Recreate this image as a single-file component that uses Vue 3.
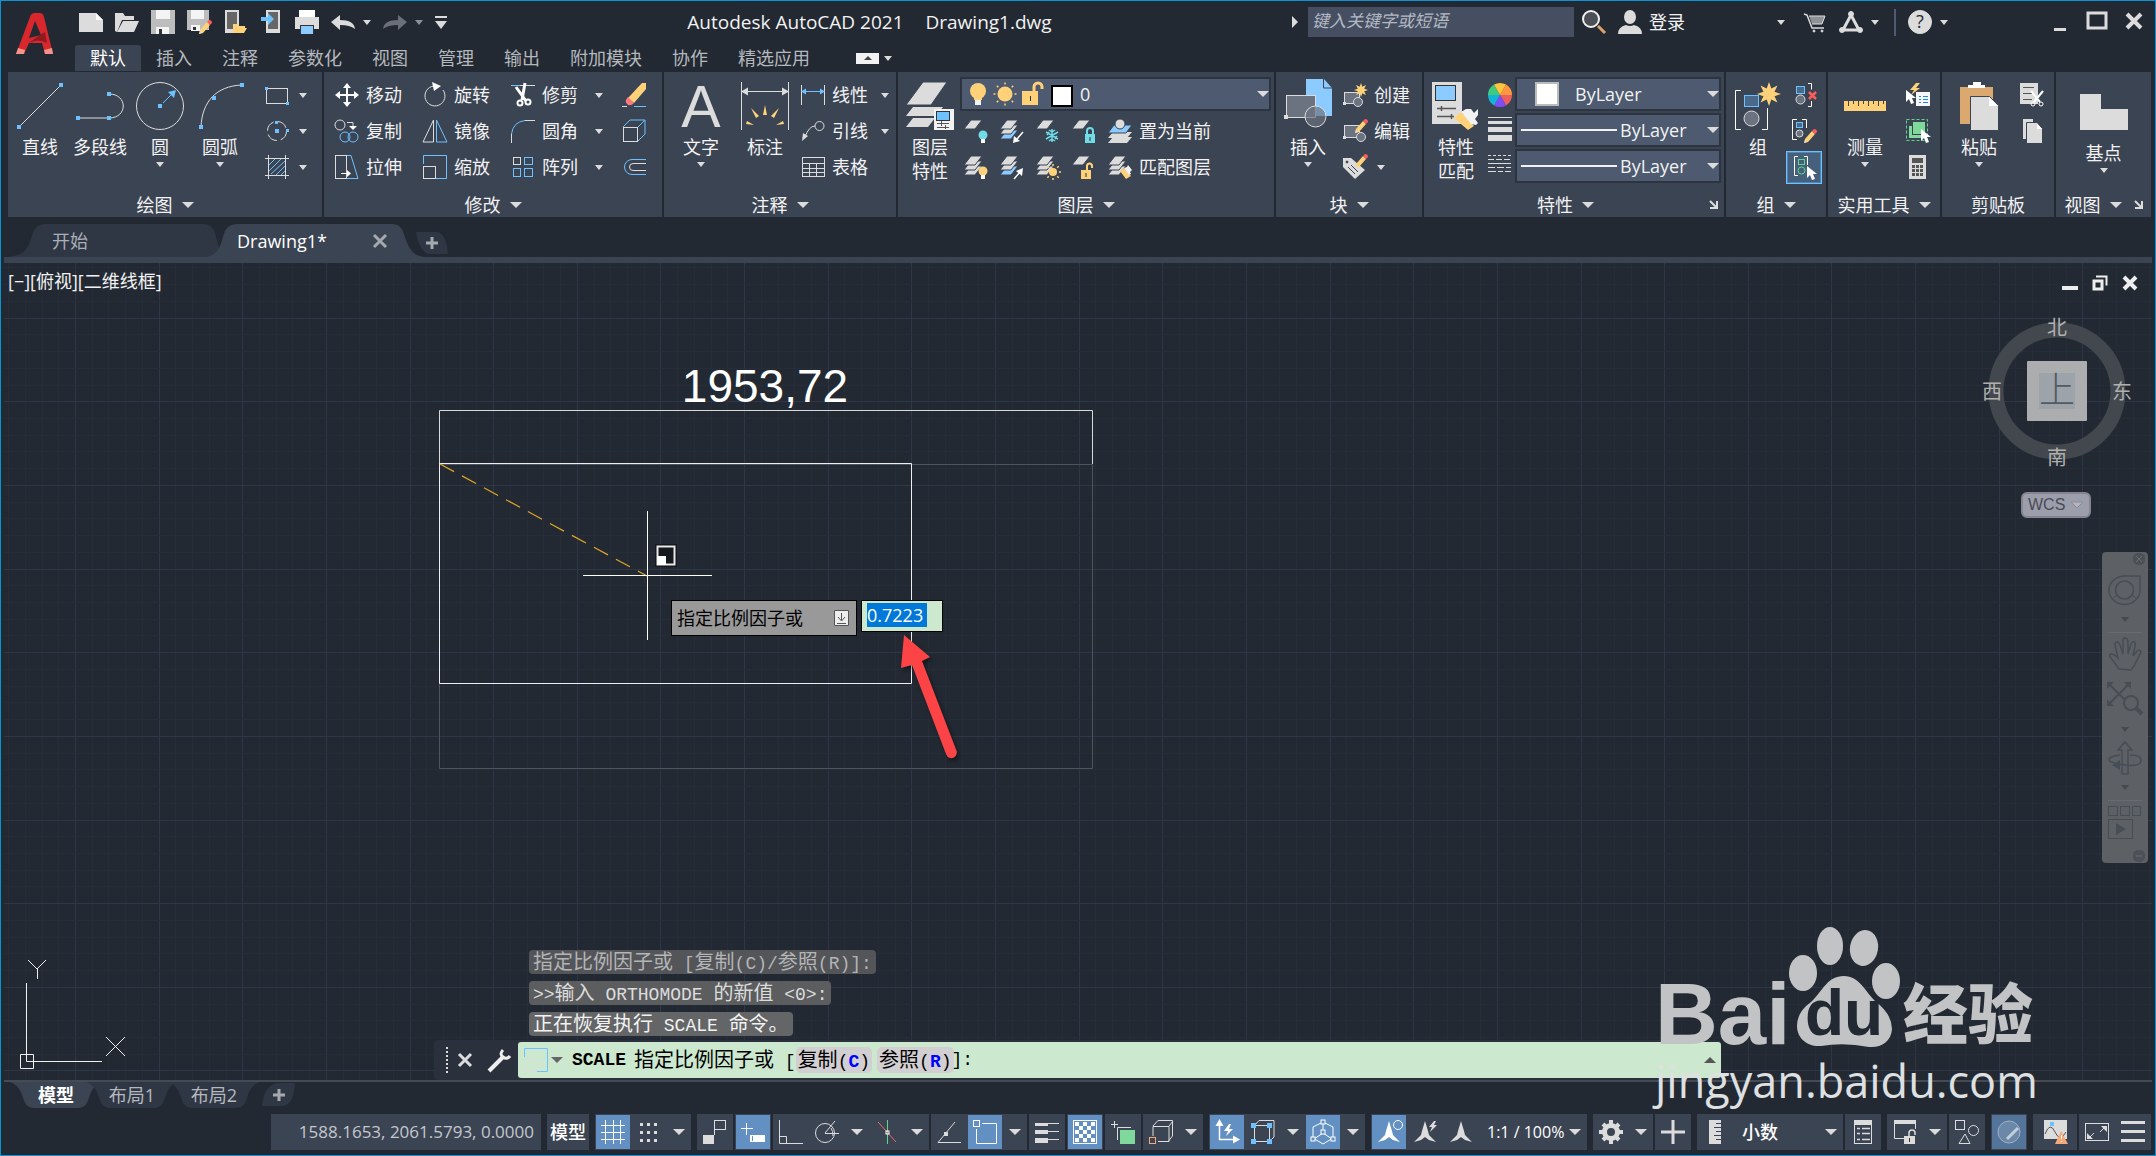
<script setup>
import { h, ref } from 'vue';

const L = '#dcdcdc';
const B = '#6ec1ff';
const Y = '#ffd27a';
const P = '#3b4453';

const line = (d, c = L, w = 1) => `<path d="${d}" fill="none" stroke="${c}" stroke-width="${w}"/>`;
const fill = (d, c = L) => `<path d="${d}" fill="${c}"/>`;
const box = (x, y, w, hh, c = L) => `<rect x="${x}" y="${y}" width="${w}" height="${hh}" fill="${c}"/>`;
const frame = (x, y, w, hh, c = L) => `<rect x="${x}" y="${y}" width="${w}" height="${hh}" fill="none" stroke="${c}"/>`;
const ring = (x, y, r, c = L, f = 'none', w = 1) => `<circle cx="${x}" cy="${y}" r="${r}" fill="${f}" stroke="${c}" stroke-width="${w}"/>`;
const dot = (x, y, c = B) => box(x - 2, y - 2, 4, 4, c);
const dashed = (d, dash) => `<path d="${d}" stroke="${L}" stroke-dasharray="${dash}"/>`;
const cursor = (x, y) => `<path d="M${x} ${y}v12l3 -3 2 5 3 -1 -2 -5h4z" fill="#fff"/>`;
const pencil = (x, y) => `<g transform="translate(${x} ${y})">${fill('M0 12l1 -4 7 -8 3 3 -7 8z', Y)}${fill('M8 0l2 -2q3 0 3 3l-2 2z', '#ff5c5c')}${fill('M0 12l1 -3 2 2z')}</g>`;
const sheets = (n, low = L) => {
  let s = '';
  for (let i = n - 1; i >= 0; i--) s += `<path d="M0 ${10 + i * 5}l7 -9h11l-7 9z" fill="${i === n - 1 && n > 1 ? low : L}" stroke="${P}"/>`;
  return s;
};
const bulb = (x, y, c) => `<circle cx="${x}" cy="${y}" r="4.5" fill="${c}"/>${box(x - 2, y + 4, 4, 4, '#fff')}`;
const lock = (x, y, c, open) => line(open ? `M${x + 6} ${y}v-4a2.5 2.5 0 0 1 5 0v2` : `M${x + 2} ${y}v-3a3 3 0 0 1 6 0v3`, c, 2) + box(x, y, 10, 9, c) + line(`M${x + 5} ${y + 3}v4`, '#333');
const star = (x, y, r) => {
  const pts = [];
  for (let i = 0; i < 16; i++) {
    const q = i % 2 ? r * 0.5 : r;
    pts.push(`${x + q * Math.sin((i * Math.PI) / 8)},${y - q * Math.cos((i * Math.PI) / 8)}`);
  }
  return `<polygon points="${pts.join(' ')}" fill="${Y}"/>`;
};
const sun = (x, y, r) => {
  let s = `<circle cx="${x}" cy="${y}" r="${r}" fill="${Y}"/>`;
  for (let i = 0; i < 8; i++) {
    const a = (i * Math.PI) / 4;
    s += line(`M${x + (r + 2) * Math.cos(a)} ${y + (r + 2) * Math.sin(a)}L${x + (r + 4) * Math.cos(a)} ${y + (r + 4) * Math.sin(a)}`, Y, 1.5);
  }
  return s;
};
const plane = (c) => fill('M12 1l3 10 1 4 7 7 -7 -2 -4 -3 -4 3 -7 2 7 -7 1 -4z', c);

const icons = {
  // quick access
  new: fill('M0 3h17l7 7v12H0z') + fill('M17 3v7h7z', '#fff'),
  open: fill('M0 21V3h8l2 3h9v4H7L2 22z') + fill('M8 11h16l-5 11H2z'),
  save: fill('M0 0h24v24H0z', '#bdbdbd') + box(5, 0, 14, 9, '#f4f4f4') + box(5, 17, 13, 7, '#f4f4f4') + box(8, 19, 3, 5, '#333'),
  saveas: fill('M0 0h22v20H0z', '#bdbdbd') + box(4, 0, 13, 9, '#f4f4f4') + box(4, 15, 9, 6, '#f4f4f4') + box(6, 17, 3, 3, '#333') + pencil(12, 12),
  webopen: box(2, 0, 14, 23) + box(4, 2, 10, 17, '#666') + fill('M10 23v-9h5l1 2h6v2h2l-3 5z', Y),
  websave: box(7, 0, 14, 23) + box(9, 2, 10, 17, '#666') + fill('M2 7h7V3l6 6 -6 6v-4H2z', B),
  print: box(4, 0, 16, 7, '#fff') + box(0, 7, 24, 12) + fill('M5 15h14v9H5z', '#333') + box(6, 16, 12, 8, '#8bcbff'),
  undo: fill('M0 12l9 -7v5q14 0 15 9 -5 -4 -15 -4v5z'),
  redo: fill('M24 12l-9 -7v5q-14 0 -15 9 5 -4 15 -4v5z', '#6b7078'),
  logo: fill('M1 41L15 4q1 -4 5 -4h5q3 0 4 4l9 37h-8l-3 -11H14l-5 11z', '#d9272e') + fill('M20 8l-6 17 12 -3z', '#232932') + fill('M14 30q10 -8 16 -11l2 11q-9 -5 -18 0z', '#8f1a1f') + fill('M1 41l2 -6 7 2 -1 4zM30 41l-1 -4 8 -2 1 6z', '#f3948c'),
  search: ring(9, 9, 8, '#f0f0f0', '#4a5056', 2) + line('M16 16l7 7', '#dba36b', 3),
  user: `<ellipse cx="12" cy="7" rx="6" ry="7" fill="${L}"/>` + fill('M0 24q0 -7 8 -9 4 2 8 0 8 2 8 9z'),
  cart: line('M0 4l3 1 5 13h12', L, 1.5) + fill('M5 6h16l-3 8H8z', '#8e9296') + line('M5 6h16l-3 8H8', L) + ring(10, 21, 1, L, L) + ring(18, 21, 1, L, L),
  share: line('M12 5L4 20H20z', L, 3) + ring(12, 4, 2.5, L, L) + ring(3, 20, 2.5, L, L) + ring(21, 20, 2.5, L, L),
  help: ring(12, 12, 11.5, L, L) + '<text x="12" y="18" text-anchor="middle" font-size="18" font-family="Open Sans" fill="#232932">?</text>',
  // draw
  line: line('M3 45L45 3') + dot(3, 45) + dot(45, 3),
  polyline: line('M2 36H33C52 36 52 12 33 12') + dot(2, 36) + dot(33, 36) + dot(33, 12),
  circle: ring(24, 24, 23.5) + line('M27 21l9 -9', B) + fill('M40 8l-2 8 -6 -6z', B) + dot(24, 24),
  arc: line('M5 45C6 20 20 4 46 3') + dot(5, 45) + dot(18, 16) + dot(46, 3),
  rect: frame(1.5, 5.5, 21, 15) + box(0, 4, 3, 3, B) + box(21, 19, 3, 3, B),
  ellipse: ring(12, 12, 9.5).replace('/>', ' stroke-dasharray="11 4"/>') + box(10, 10, 4, 4, B) + box(10, 2, 3, 3, B) + box(21, 10, 3, 3, B),
  hatch: line('M3.5 0v24M20.5 0v24M0 3.5h24M0 20.5h24') + line('M4 10l6 -6M4 16L16 4M6 19L20 6M11 20l9 -9M16 20l4 -4', B),
  // modify
  move: line('M12 3v18M3 12h18', '#fff', 2) + fill('M12 0l4 5H8zM12 24l-4 -5h8zM0 12l5 -4v8zM24 12l-5 4V8z', '#fff'),
  rotate: line('M20 7a10 10 0 1 1 -7 -4') + fill('M9 -1l9 4 -7 5z', '#fff'),
  trim: line('M0 2.5h9', B) + line('M9 2.5h15') + line('M5 4l10 14M14 0L11 17', '#fff', 3) + ring(9, 20, 2.5, '#fff', 'none', 2) + ring(17, 19, 2.5, '#fff', 'none', 2),
  erase: fill('M24 0v6L12 20 6 15 20 0z', Y) + fill('M6 14l6 6q-4 4 -7 1t1 -7z', '#ff7a80') + line('M0 23.5h5') + line('M12 23.5h12', B),
  copy: ring(5, 6, 5) + line('M12 3.5h6v4') + fill('M14 7h8l-4 4z', '#fff') + ring(10, 18, 5, B) + ring(18, 18, 5, B),
  mirror: line('M10.5 1v22H0z') + line('M13.5 1v22H24z', B),
  fillet: line('M0.5 24v-9') + line('M0.5 15Q2 3 14 1.5', B) + line('M14 1.5h10'),
  explode: frame(1.5, 8.5, 14, 14) + line('M1 8l7 -7h15M16 8l7 -7v14l-7 7', B),
  stretch: frame(0.5, 0.5, 11, 23) + line('M12 0.5h4l7 23H12', B) + line('M6 18.5h6', '#fff') + fill('M12 15v7l4 -3.5z', '#fff'),
  scale: line('M0.5 9V0.5h23v23H13', B) + frame(0.5, 11.5, 12, 12),
  array: frame(2.5, 2.5, 7, 7) + frame(13.5, 2.5, 8, 7, B) + frame(2.5, 13.5, 7, 8, B) + frame(13.5, 13.5, 8, 8, B),
  offset: line('M24 4.5H10a7.5 7.5 0 0 0 0 15h14', B) + line('M24 8.5H11a3.5 3.5 0 0 0 0 7h13'),
  // annotation
  text: `<text x="24" y="45" text-anchor="middle" font-size="59" font-family="Liberation Sans" fill="${L}">A</text>`,
  dim: line('M0.5 0v48M47.5 0v48M2 9.5h44') + fill('M0 9.5l7 -4v8zM48 9.5l-7 -4v8z') + fill('M22 33l2 -10 2 10zM15 36l-5 -10 8 8zM33 36l5 -10 -8 8zM13 43l-8 -1 1 -3zM35 43l8 -1 -1 -3z', Y),
  linear: line('M0.5 2v20M23.5 2v20') + line('M2 8.5h20', B) + fill('M0 8.5l5 -3v6zM24 8.5l-5 3v-6z', B),
  leader: ring(18.5, 7, 4.5) + line('M14 7q-6 0 -10 11') + fill('M1 22l1 -8 5 3z'),
  table: frame(1.5, 2.5, 22, 19) + line('M2 8.5h21M2 13.5h21M2 17.5h21M8.5 9v12M15.5 9v12'),
  // layers
  layers: fill('M0 45l7 -9h22l-7 9z') + fill('M0 34l7 -9h30l-7 9z') + `<path d="M0 23L17 0h24L25 23z" fill="${L}" stroke="${P}"/>` + box(28, 27, 20, 33, '#f2f2f2').replace('height="33"', 'height="21"') + `<rect x="30.5" y="29.500" width="13" height="9" fill="${B}" stroke="#333"/>` + line('M31 41.5h12M31 45.5h12M35.5 39v5M39.5 43v4', '#555'),
  bulb: `<circle cx="12" cy="9" r="8" fill="${Y}"/>` + box(8, 14, 8, 4, Y) + box(9, 18, 6, 5, '#f2f2f2'),
  sun: sun(12, 12, 7.5),
  unlock: line('M14 12V5a4 4 0 0 1 8 0v2', Y, 3) + box(2, 9, 16, 14, Y) + line('M10.5 14v5', '#333'),
  loff: sheets(1) + bulb(19, 16, '#6fdce8'),
  liso: sheets(3, '#8bcbff') + line('M23 13l-6 7', '#fff', 1.5) + fill('M13 24l1 -7 6 5z', '#fff'),
  lfreeze: sheets(1) + line('M16 10v13M10 13l12 7M22 13l-12 7M13 11l3 2 3 -2M13 22l3 -2 3 2M11 16l2 -3M21 17l-2 3', '#6fdce8', 1.5),
  llock: sheets(1) + lock(13, 15, '#6fdce8', false),
  lcur: fill('M0 24l5 -6h19l-5 6z') + fill('M0 19l5 -6h19l-5 6z') + `<path d="M0 14l6 -8h18l-6 8z" fill="#8bcbff" stroke="${P}"/>` + ring(12, 5, 5, P, L),
  lon: sheets(3) + bulb(19, 16, Y),
  luniso: sheets(3, '#8bcbff') + line('M14 24l6 -7', '#fff', 1.5) + fill('M23 13l-1 8 -6 -5z', '#fff'),
  lthaw: sheets(3) + sun(17, 17, 4),
  lunlock: sheets(1) + lock(9, 15, Y, true),
  lmatch: sheets(3) + fill('M12 16l4 -3 7 8 -5 3z', Y) + fill('M16 13l3 -1 1 -2 4 5 -2 2 1 2 -2 1z', '#f2f2f2'),
  // block
  insert: fill('M22 -3h18l8 9v28H22z', '#8bcbff') + line('M39.5 -3v9h9', P) + `<rect x="2.500" y="13.500" width="29" height="22" fill="#6b7280" stroke="${L}"/>` + ring(31.5, 34.5, 10.5, L, '#6b7280b0') + box(0, 33, 4, 4),
  create: `<rect x="1.500" y="9.500" width="15" height="11" fill="#6b7280" stroke="${L}"/>` + box(0, 19, 3, 3) + ring(15, 19, 4.5, L, '#6b7280') + star(18, 7, 7),
  edit: `<rect x="1.500" y="6.500" width="15" height="12" fill="#6b7280" stroke="${L}"/>` + box(0, 17, 3, 3) + ring(18, 18, 4.5, L, '#6b7280') + pencil(12, 2),
  tag: fill('M0 3h8l14 12 -10 9L0 12z') + ring(4, 7, 1, P, P) + line('M5 12l7 7M8 10l7 7', P) + pencil(12, 1),
  // properties
  match: box(0, 0, 30, 42) + `<rect x="3.500" y="3.500" width="20" height="15" fill="#8bcbff" stroke="#333"/>` + line('M5 26.5h19M5 34.5h17M9.5 24v5M19.5 32v5', '#555', 1.5) + fill('M22 36l7 -6 13 14 -6 4z', Y) + fill('M29 30l5 -3h5l3 4 4 -4v6l-3 4 3 4 -2 2 -5 -1z', '#f2f2f2'),
  wheel: ['#ff9640', '#ec5f5f', '#7f4bf5', '#12b5d8', '#3fca7d', '#ffc53d'].map((c, i) => {
    const a = ((i * 60 - 60) * Math.PI) / 180;
    const b = ((i * 60) * Math.PI) / 180;
    return fill(`M12 12L${12 + 12 * Math.cos(a)} ${12 + 12 * Math.sin(a)}A12 12 0 0 1 ${12 + 12 * Math.cos(b)} ${12 + 12 * Math.sin(b)}z`, c);
  }).join(''),
  weights: box(0, -2, 24, 1) + box(0, 2, 24, 3) + box(0, 8, 24, 5) + box(0, 16, 24, 6),
  types: dashed('M0 0.5h23', '3 2') + dashed('M0 4.5h23', '6 2') + line('M0 8.5h23') + dashed('M0 12.5h23', '7 2') + line('M0 16.5h8M10 16.5h5M17 16.5h6'),
  // group
  group: line('M7 8.5H1.5v39H7M28 47.5h5.5V26', '#fff') + `<rect x="10.500" y="13.500" width="14" height="11" fill="#4a6a8c" stroke="${B}"/>` + ring(17.5, 36.5, 7.5, L, '#6b7280') + star(35, 12, 12),
  ungroup: `<rect x="4.500" y="3.500" width="8" height="7" fill="#4a6a8c" stroke="${B}"/>` + ring(8.5, 16.5, 4.5, L, '#6b7280') + line('M16 0.5h3.5v6M16 23.5h3.5V18', '#fff') + line('M17 9l7 7M24 9l-7 7', '#ff5c5c', 2.5),
  groupedit: line('M5 0.5H0.5v20H5M10 0.5h4.5V9', '#fff') + `<rect x="4.500" y="3.500" width="6" height="5" fill="#4a6a8c" stroke="${B}"/>` + ring(7.5, 14.5, 3.5, L, '#6b7280') + pencil(12, 12),
  groupsel: line('M6 1.5H2.5v19H6M12 1.5h3.5V10', '#fff') + frame(6.5, 4.5, 6, 5, '#5fd68a') + ring(9.5, 15.5, 3.5, '#5fd68a') + cursor(15, 11),
  // utilities
  measure: box(3, 19, 42, 10, Y) + line('M7.5 19v5M12.5 19v3M17.5 19v5M22.5 19v3M27.5 19v5M32.5 19v3M37.5 19v5M42.5 19v3', '#444'),
  quick: fill('M10 0L4 7h4l-3 5 9 -7h-4l4 -5z', Y) + cursor(0, 7) + box(10, 9, 14, 14, '#f7f7f7') + line('M13 13.5h2M17 13.5h5M13 16.5h2M17 16.5h5M13 19.5h2M17 19.5h5', '#1e88e5'),
  selall: frame(0.5, 0.5, 21, 21, '#5fd68a').replace('/>', ' stroke-dasharray="3 2"/>') + box(3, 7, 12, 12, '#7ed99b') + `<rect x="6.500" y="2.500" width="13" height="13" fill="#7ed99b" stroke="${P}"/>` + cursor(15, 10),
  calc: box(3, 0, 17, 24) + box(6, 3, 11, 5, '#555') + line('M6 11.5h3M10 11.5h3M14 11.5h3M6 15.5h3M10 15.5h3M14 15.5h3M6 19.5h3M10 19.5h3M14 19.5h3', '#555', 3),
  // clipboard, view
  paste: box(5, 5, 33, 37, '#dba96f') + fill('M13 6V3h5V0h8v3h4v3z', '#fff') + `<path d="M15.5 14.5h19l9 9v25h-28z" fill="${L}" stroke="${P}"/>` + fill('M34 15v9h9z', '#fff'),
  cut: box(0, 0, 18, 21) + line('M3 4.5h11M3 10.5h9M3 16.5h9', '#555', 1) + line('M11 8l9 11M23 8l-9 11', '#fff', 2) + ring(13, 21, 2, '#fff') + ring(21, 21, 2, '#fff'),
  copyclip: box(3, 0, 10, 20) + `<path d="M6.5 3.5h10l6 6v15h-16z" fill="${L}" stroke="${P}"/>` + fill('M17 4v6h5z', '#fff'),
  base: fill('M0 6h21v15h27v21H0z'),
  // canvas
  wrench: line('M2 23L16 9', '#eee', 4) + line('M16 2q-4 4 0 7t7 -1', '#eee', 3),
  wheelnav: line('M1 15A16 14 0 0 1 17 1h15v14A15 14 0 0 1 1 15z', '#474d55', 1.5) + ring(16.5, 15, 9, '#474d55', 'none', 1.5) + line('M4 24l5 -4M29 24l-5 -4', '#474d55'),
  pan: line('M11 31L3 20q-3 -3 0 -4 3 0 7 4L7 7q0 -3 2 -3t3 3l3 9V3q0 -3 2 -3t3 3v13l3 -10q1 -3 3 -2t1 4l-2 10 4 -5q3 -2 4 1l-7 14 -3 4z', '#474d55', 1.5),
  zoomext: line('M2 2l20 20M22 2L2 22', '#474d55', 2) + fill('M0 0h7L0 7zM24 0v7l-7 -7zM0 24v-7l7 7z', '#474d55') + ring(24, 21, 7, '#474d55', '#5d6165', 2) + line('M29 26l6 6', '#474d55', 4),
  orbit: line('M14 32V8h-4l7 -8 7 8h-4v24zM12 13q-12 2 -11 5t16 5 16 -4 -11 -6', '#474d55', 1.5) + fill('M4 23l8 -5v10z', '#474d55'),
  motion: frame(0.5, 0.5, 9, 9, '#474d55') + frame(12.5, 0.5, 9, 9, '#474d55') + frame(24.5, 0.5, 8, 9, '#474d55') + frame(0.5, 13.5, 24, 19, '#474d55') + fill('M8 17l10 6 -10 6z', '#474d55'),
  // status bar
  grid: line('M4.5 0v24M12.5 0v24M19.5 0v24M0 5.5h24M0 12.5h24M0 19.5h24', '#fff', 1),
  snap: [3, 10, 17].map((x) => [3, 11, 19].map((y) => box(x, y, 3, 3)).join('')).join(''),
  infer: box(0, 15, 11, 9) + frame(11.5, 0.5, 11, 9) + line('M11.5 10v5'),
  dyn: line('M0 8.5h12M5.5 3v12', '#fff') + box(9, 15, 15, 7, '#fff') + line('M11.5 16v5', '#6290c2'),
  ortho: line('M0.5 0v23.5H24M0.5 16.5h7v7'),
  polar: ring(10, 13, 9.5) + line('M10 13.5h14M10 13L20 1M16 8q2 3 2 8'),
  iso: line('M12.5 0v24', '#5fd68a') + line('M3 2l9 10 9 10', '#ec6a6a') + frame(11, 11, 3, 3, '#fff'),
  otrack: line('M18 2L1 22.5h23') + box(7, 12, 4, 4),
  osnap: line('M9 3.5h14.5v20H3.5V9', '#fff') + frame(0.5, 0.5, 6, 6, '#fff'),
  lwt: box(0, 3, 13, 3) + line('M13 3.5h11M13 11.5h11M13 19.5h11') + box(0, 10, 13, 4) + box(0, 18, 13, 5),
  transp: frame(0.5, 0.5, 23, 23, '#fff') + [0, 1, 2, 3, 4].map((r) => [0, 1, 2, 3, 4].map((c) => ((r + c) % 2 ? '' : box(2 + c * 4, 2 + r * 4, 4, 4, '#fff'))).join('')).join(''),
  cycle: line('M0 4.5h7M3.5 1v7M6.5 20V7.5H20') + box(9, 10, 15, 14, '#7ed99b'),
  cube: line('M4 16V6.5h16v15H9M4 6l5 -5.5h14.5V16l-4 5M20 6l4 -5') + frame(0.5, 17.5, 6, 6, '#f5a878'),
  ucs: line('M4.5 4v15.5H20', '#fff', 1.5) + fill('M4.5 -1l4 7h-8zM25 19.5l-7 -4v8zM14 4l-5 7h4l-2 5 7 -7h-4l2 -5z', '#fff'),
  filter: frame(3.5, 5.5, 15, 16) + line('M4 5l4 -4.5h15V17l-4 4') + box(0, 3, 5, 5, B) + box(16, 3, 5, 5, B) + box(0, 19, 5, 5, B) + box(16, 19, 5, 5, B),
  gizmo: line('M12 2L2 7v11l10 6 10 -6V7zM12 3v10M12 13l-9 6M12 13l9 6', '#fff') + ['10 0', '10 10', '0 17', '20 17'].map((p) => `<rect x="${p.split(' ')[0]}" y="${p.split(' ')[1]}" width="4" height="4" fill="#6290c2" stroke="#fff"/>`).join(''),
  annovis: plane('#fff') + ring(21, 5, 4.5, '#fff'),
  annoauto: plane(L) + fill('M21 1l-5 6h3l-2 5 7 -7h-3l2 -4z'),
  anno: plane(L),
  gear: ring(12, 12, 6.5, L, 'none', 5) + line('M12 0v4M12 20v4M0 12h4M20 12h4M4 4l3 3M20 4l-3 3M4 20l3 -3M20 20l-3 -3', L, 4),
  plus: line('M12 0v24M0 12h24', L, 3),
  ruler: box(6, 0, 12, 24) + line('M13 3.5h5M11 7.5h7M13 11.5h5M11 15.5h7M13 19.5h5', '#3b4453'),
  props: frame(3.5, 0.5, 17, 23) + box(3, 0, 18, 5) + line('M6 8.5h3M11 8.5h8M6 13.5h3M11 13.5h8M6 19.5h3M11 19.5h8', L, 1.5),
  uilock: line('M11 18.5H1.5V3M22.5 3v6') + box(1, 0, 22, 4) + line('M16 16v-3a3 3 0 0 1 6 0v2', L, 1.5) + box(11, 16, 11, 8) + line('M16.5 18v4', '#333'),
  isolate: frame(0.5, 0.5, 9, 9) + ring(18.5, 10.5, 5) + line('M10 14l5 9.5H4z'),
  perf: ring(12, 12, 11, '#9db1c7', '#6c88a8') + line('M10 19L21 8', '#c3ced9', 3),
  trusted: box(1, 0, 23, 19) + line('M2 14Q7 1 12 12T23 12', '#555') + dot(9, 4) + fill('M18 11l7 13H12z', '#f5a878') + line('M18.5 15v4M18.5 21v1', '#fff'),
  clean: frame(0.5, 3.5, 23, 17) + fill('M16 6h6v6zM2 13v6h6z') + line('M15 12l4 -4M9 13l-4 4'),
  menu: line('M0 2.5h24M0 11.5h24M0 20.5h24', L, 3),
};

const Icon = (props) => {
  const w = props.w || 24;
  const hh = props.h || w;
  return h('svg', { width: w, height: hh, viewBox: `0 0 ${w} ${hh}`, innerHTML: icons[props.name], 'aria-hidden': 'true' });
};
Icon.props = ['name', 'w', 'h'];

const quickAccess = ['new', 'open', 'save', 'saveas', 'webopen', 'websave', 'print', 'undo'];
const menus = ['默认', '插入', '注释', '参数化', '视图', '管理', '输出', '附加模块', '协作', '精选应用'];
const activeMenu = ref('默认');

const drawTools = [
  { icon: 'line', label: '直线' },
  { icon: 'polyline', label: '多段线' },
  { icon: 'circle', label: '圆', more: true },
  { icon: 'arc', label: '圆弧', more: true },
];
const modifyRows = [
  { tools: [['move', '移动'], ['rotate', '旋转'], ['trim', '修剪']], last: 'erase' },
  { tools: [['copy', '复制'], ['mirror', '镜像'], ['fillet', '圆角']], last: 'explode' },
  { tools: [['stretch', '拉伸'], ['scale', '缩放'], ['array', '阵列']], last: 'offset' },
];
const annotate = [['linear', '线性', true], ['leader', '引线', true], ['table', '表格', false]];
const layerRows = [
  { tools: ['loff', 'liso', 'lfreeze', 'llock'], icon: 'lcur', label: '置为当前' },
  { tools: ['lon', 'luniso', 'lthaw', 'lunlock'], icon: 'lmatch', label: '匹配图层' },
];

const layouts = ref(['模型', '布局1', '布局2']);
const scaleFactor = ref('0.7223');

// each group is a run of cells; "v" is a drop-down arrow, "*" marks a cell that is on
const statusGroups = [
  { cells: ['*grid', 'snap', 'v'], gap: true },
  { cells: ['infer'], gap: true },
  { cells: ['*dyn'] },
  { cells: ['ortho', 'polar', 'v', 'iso', 'v'] },
  { cells: ['otrack', '*osnap', 'v'] },
  { cells: ['lwt'] },
  { cells: ['*transp'] },
  { cells: ['cycle'] },
  { cells: ['cube', 'v'] },
  { cells: ['*ucs', 'filter', 'v', '*gizmo', 'v'], gap: true },
  { cells: ['*annovis', 'annoauto', 'anno', 'scale'], gap: true },
  { cells: ['gear', 'v'], gap: true },
  { cells: ['plus'] },
  { cells: ['units'], gap: true },
  { cells: ['props'] },
  { cells: ['uilock', 'v'], gap: true },
  { cells: ['isolate'] },
  { cells: ['*perf'], gap: true },
  { cells: ['trusted'], gap: true },
  { cells: ['clean', 'menu'] },
];

// grid lines: a major one every 84 px or so, four minor ones between
const step = 83.64 / 5;
const columns = Array.from({ length: 160 }, (_, i) => ({ at: Math.round(75 + (i - 4) * step), major: (i - 4) % 5 === 0 }));
const rows = Array.from({ length: 90 }, (_, i) => ({ at: Math.round(401.3 + (i - 8) * step), major: (i - 10) % 5 === 3 || (i - 8) % 5 === 0 }));
</script>

<template>
  <div class="app">
    <header class="top">
      <button class="logo" aria-label="AutoCAD"><Icon name="logo" :w="39" :h="42" /></button>
      <div class="top-main">
        <div class="title-row">
          <div class="quick">
            <button v-for="q in quickAccess" :key="q" :aria-label="q"><Icon :name="q" /></button>
            <button class="more" aria-label="undo list"><i class="caret"></i></button>
            <button aria-label="redo"><Icon name="redo" /></button>
            <button class="more dim" aria-label="redo list"><i class="caret"></i></button>
            <button class="custom" aria-label="customize"><i class="caret wide"></i></button>
          </div>
          <h1><span>Autodesk AutoCAD 2021</span><span>Drawing1.dwg</span></h1>
          <div class="info">
            <i class="caret right"></i>
            <input type="text" class="search" placeholder="键入关键字或短语" aria-label="搜索">
            <button aria-label="search"><Icon name="search" /></button>
            <button class="login"><Icon name="user" />登录<i class="caret"></i></button>
            <button aria-label="store"><Icon name="cart" /></button>
            <button class="with-caret" aria-label="share"><Icon name="share" /><i class="caret"></i></button>
            <span class="bar"></span>
            <button class="with-caret" aria-label="help"><Icon name="help" /><i class="caret"></i></button>
          </div>
          <div class="window-buttons">
            <button aria-label="minimize"><svg width="20" height="20"><path d="M4 17h12v3H4z" fill="#dcdcdc" /></svg></button>
            <button aria-label="maximize"><svg width="20" height="20"><path d="M1 2h18v15H1z" fill="none" stroke="#dcdcdc" stroke-width="3" /></svg></button>
            <button aria-label="close"><svg width="20" height="20"><path d="M3 3l14 14M17 3L3 17" stroke="#dcdcdc" stroke-width="4" /></svg></button>
          </div>
        </div>
        <nav class="menus">
          <button v-for="m in menus" :key="m" :class="{ active: m === activeMenu }" @click="activeMenu = m">{{ m }}</button>
          <button class="collapse" aria-label="collapse"><i></i></button>
          <i class="caret"></i>
        </nav>
      </div>
    </header>

    <section class="ribbon">
      <div class="panel">
        <div class="body draw">
          <button v-for="t in drawTools" :key="t.icon" class="large"><Icon :name="t.icon" :w="48" />{{ t.label }}<i v-if="t.more" class="caret"></i></button>
          <div class="stack">
            <button v-for="i in ['rect', 'ellipse', 'hatch']" :key="i" class="pair" :aria-label="i"><Icon :name="i" /><i class="caret"></i></button>
          </div>
        </div>
        <button class="foot">绘图<i class="caret big"></i></button>
      </div>

      <div class="panel">
        <div class="body modify">
          <template v-for="r in modifyRows" :key="r.last">
            <button v-for="t in r.tools" :key="t[0]" class="small"><Icon :name="t[0]" />{{ t[1] }}</button>
            <button class="more" :aria-label="r.tools[2][1]"><i class="caret"></i></button>
            <button class="small end" :aria-label="r.last"><Icon :name="r.last" /></button>
          </template>
        </div>
        <button class="foot">修改<i class="caret big"></i></button>
      </div>

      <div class="panel">
        <div class="body note">
          <button class="large"><Icon name="text" :w="48" />文字<i class="caret"></i></button>
          <button class="large"><Icon name="dim" :w="48" />标注</button>
          <div class="stack">
            <button v-for="a in annotate" :key="a[0]" class="small spread"><Icon :name="a[0]" />{{ a[1] }}<i v-if="a[2]" class="caret"></i></button>
          </div>
        </div>
        <button class="foot">注释<i class="caret big"></i></button>
      </div>

      <div class="panel">
        <div class="body layer">
          <button class="large"><Icon name="layers" :w="48" /><span>图层<br>特性</span></button>
          <div class="stack grow">
            <label class="combo">
              <Icon name="bulb" /><Icon name="sun" /><Icon name="unlock" /><i class="swatch"></i>
              <select aria-label="图层"><option>0</option></select>
              <i class="caret big"></i>
            </label>
            <div v-for="r in layerRows" :key="r.icon" class="tools">
              <button v-for="t in r.tools" :key="t" :aria-label="t"><Icon :name="t" /></button>
              <button class="small"><Icon :name="r.icon" />{{ r.label }}</button>
            </div>
          </div>
        </div>
        <button class="foot">图层<i class="caret big"></i></button>
      </div>

      <div class="panel">
        <div class="body block">
          <button class="large"><Icon name="insert" :w="48" />插入<i class="caret"></i></button>
          <div class="stack">
            <button class="small"><Icon name="create" />创建</button>
            <button class="small"><Icon name="edit" />编辑</button>
            <button class="small" aria-label="属性"><Icon name="tag" /><i class="caret"></i></button>
          </div>
        </div>
        <button class="foot">块<i class="caret big"></i></button>
      </div>

      <div class="panel">
        <div class="body props">
          <button class="large"><Icon name="match" :w="48" /><span>特性<br>匹配</span></button>
          <div class="stack icons">
            <Icon name="wheel" /><Icon name="weights" /><Icon name="types" />
          </div>
          <div class="stack grow">
            <label class="combo color"><i class="swatch"></i><select aria-label="颜色"><option>ByLayer</option></select><i class="caret big"></i></label>
            <label class="combo"><i class="rule"></i><select aria-label="线宽"><option>ByLayer</option></select><i class="caret big"></i></label>
            <label class="combo"><i class="rule"></i><select aria-label="线型"><option>ByLayer</option></select><i class="caret big"></i></label>
          </div>
        </div>
        <button class="foot launch">特性<i class="caret big"></i><svg width="9" height="9"><path d="M1 1l6 6M8 1v7H1" fill="none" stroke="#dcdcdc" stroke-width="2" /></svg></button>
      </div>

      <div class="panel">
        <div class="body two">
          <button class="large"><Icon name="group" :w="48" />组</button>
          <div class="stack icons">
            <button aria-label="解除编组"><Icon name="ungroup" /></button>
            <button aria-label="组编辑"><Icon name="groupedit" /></button>
            <button class="on" aria-label="组选择"><Icon name="groupsel" /></button>
          </div>
        </div>
        <button class="foot">组<i class="caret big"></i></button>
      </div>

      <div class="panel">
        <div class="body two">
          <button class="large"><Icon name="measure" :w="48" />测量<i class="caret"></i></button>
          <div class="stack icons">
            <button v-for="i in ['quick', 'selall', 'calc']" :key="i" :aria-label="i"><Icon :name="i" /></button>
          </div>
        </div>
        <button class="foot">实用工具<i class="caret big"></i></button>
      </div>

      <div class="panel">
        <div class="body two">
          <button class="large"><Icon name="paste" :w="48" />粘贴<i class="caret"></i></button>
          <div class="stack icons">
            <button v-for="i in ['cut', 'copyclip']" :key="i" :aria-label="i"><Icon :name="i" /></button>
          </div>
        </div>
        <button class="foot">剪贴板</button>
      </div>

      <div class="panel">
        <div class="body one">
          <button class="large"><Icon name="base" :w="48" />基点<i class="caret"></i></button>
        </div>
        <button class="foot launch">视图<i class="caret big"></i><svg width="9" height="9"><path d="M1 1l6 6M8 1v7H1" fill="none" stroke="#dcdcdc" stroke-width="2" /></svg></button>
      </div>
    </section>

    <nav class="files">
      <button class="file">
        <svg class="shape" viewBox="0 0 220 33" preserveAspectRatio="none"><path d="M0 33C18 31 20 24 24 10Q27 0 37 0H192Q200 0 203 8C208 26 208 31 220 33z" /></svg>
        <span>开始</span>
      </button>
      <button class="file current">
        <svg class="shape" viewBox="0 0 220 33" preserveAspectRatio="none"><path d="M0 33C12 31 14 24 18 10Q21 0 31 0H188Q196 0 199 8C205 26 208 31 220 33z" /></svg>
        <span>Drawing1*</span>
        <svg width="14" height="14"><path d="M1 1l12 12M13 1L1 13" stroke="#a5a9af" stroke-width="3" /></svg>
      </button>
      <button class="add" aria-label="新图形"><svg width="32" height="22"><path d="M0 0H20Q30 0 32 22H14Q4 22 0 0z" fill="#303744" /><path d="M16 5v12M10 11h12" stroke="#a5a9af" stroke-width="3" /></svg></button>
    </nav>

    <main class="canvas">
      <svg class="drawing" width="100%" height="100%">
        <g transform="translate(-4 -263)" shape-rendering="crispEdges">
          <rect v-for="c in columns" :key="'c' + c.at" :x="c.at" y="0" width="1" height="2200" :class="c.major ? 'major' : 'minor'" />
          <rect v-for="r in rows" :key="'r' + r.at" x="0" :y="r.at" width="4000" height="1" :class="r.major ? 'major' : 'minor'" />
        </g>
        <g transform="translate(-4 -263)" fill="none">
          <path d="M439.500 464.500H1092.500V768.500H439.500z" stroke="#4e545b" />
          <path d="M439.500 464V410.500H1092.500V464" stroke="#d9dadc" />
          <path d="M439.500 463.500H911.500V683.500H439.500z" stroke="#eceef2" />
          <path d="M440 464L647 576" stroke="#e0a526" stroke-width="1.200" stroke-dasharray="16 9" />
          <path d="M647.500 511V640M583 575.500H712" stroke="#fff" />
          <rect x="655" y="544" width="22" height="23" fill="#15181c" />
          <path d="M657.500 546.500h17v18h-17z" stroke="#e8e8e8" stroke-width="2" />
          <rect x="657" y="556" width="9" height="9" fill="#fff" />
          <text x="765" y="402" class="dimension" text-anchor="middle">1953,72</text>
        </g>
      </svg>

      <p class="view-label">[−][俯视][二维线框]</p>

      <label class="prompt" for="factor">指定比例因子或
        <svg width="15" height="16"><path d="M0.500 0.500h14v15H0.500z" fill="#eee" stroke="#555" /><path d="M7.500 3v7M4 7l3.500 4L11 7M3 13.500h9" fill="none" stroke="#555" /></svg>
      </label>
      <div class="value"><input id="factor" v-model="scaleFactor" type="text"></div>
      <svg class="pointer" width="68" height="132"><path d="M9 5L35 27L27 31L62 122Q61 129 55 128Q52 127 51 124L17 35L6 38z" fill="#fc4446" /></svg>

      <div class="view-buttons">
        <button aria-label="最小化"><svg width="16" height="16"><path d="M0 11h16v4H0z" fill="#eee" /></svg></button>
        <button aria-label="还原"><svg width="16" height="16"><path d="M4 1.500h10.500v9" fill="none" stroke="#eee" stroke-width="2" /><path d="M2 6h8v8H2z" fill="none" stroke="#eee" stroke-width="3" /></svg></button>
        <button aria-label="关闭"><svg width="16" height="16"><path d="M2 2l12 12M14 2L2 14" stroke="#eee" stroke-width="4" /></svg></button>
      </div>

      <svg class="view-cube" width="152" height="160" viewBox="0 0 152 160">
        <circle cx="76" cy="80" r="61" fill="none" stroke="#43484f" stroke-width="15" />
        <rect x="46" y="50" width="60" height="60" rx="1" fill="#acadae" />
        <rect x="58" y="62" width="36" height="36" fill="#9ca4a9" />
        <g text-anchor="middle" fill="#b0b0ae" font-size="20">
          <text x="76" y="24">北</text><text x="76" y="154">南</text>
          <text x="11" y="88">西</text><text x="141" y="88">东</text>
          <text x="76" y="92" font-size="36" font-weight="300" fill="#535a64">上</text>
        </g>
      </svg>
      <button class="wcs">WCS<svg width="14" height="8"><path d="M1 1h12L7 7z" fill="#b2b3be" stroke="#8a8b98" /></svg></button>

      <aside class="nav-bar">
        <svg class="nav-close" width="12" height="12"><rect width="12" height="12" rx="5" fill="#4c5157" /><path d="M3 3l6 6M9 3L3 9" stroke="#686d72" /></svg>
        <button aria-label="导航控制盘"><Icon name="wheelnav" :w="34" :h="32" /></button>
        <i class="caret"></i>
        <button class="ruled" aria-label="平移"><Icon name="pan" :w="34" :h="34" /></button>
        <button aria-label="缩放"><Icon name="zoomext" :w="36" :h="34" /></button>
        <i class="caret"></i>
        <button aria-label="动态观察"><Icon name="orbit" :w="34" :h="33" /></button>
        <i class="caret"></i>
        <button class="ruled" aria-label="ShowMotion"><Icon name="motion" :w="34" :h="34" /></button>
        <svg class="nav-close" width="12" height="12"><rect width="12" height="12" rx="5" fill="#4c5157" /><path d="M3 6h6" stroke="#686d72" /></svg>
      </aside>

      <svg class="ucs" width="116" height="116" fill="none" stroke="#f0f0f0">
        <path d="M12.500 24V102.500H88M6.500 95.500h13v14h-13zM14 1l9 9 9 -9M23.500 10v10M92 78l19 19M111 78L92 97" />
      </svg>

      <div class="command">
        <p class="old">指定比例因子或<b> [</b>复制<b>(C)/</b>参照<b>(R)]:</b></p>
        <p class="mid-line"><b>&gt;&gt;</b>输入<b> ORTHOMODE </b>的新值<b> &lt;0&gt;:</b></p>
        <p>正在恢复执行<b> SCALE </b>命令。</p>
        <div class="command-bar">
          <span class="grip"></span>
          <button aria-label="关闭"><svg width="14" height="14"><path d="M1 1l12 12M13 1L1 13" stroke="#dcdcdc" stroke-width="3" /></svg></button>
          <button class="wrench" aria-label="自定义"><Icon name="wrench" /></button>
          <div class="entry">
            <Icon name="scale" />
            <i class="caret big"></i>
            <strong>SCALE</strong>
            <span>指定比例因子或<b> [</b></span>
            <button class="chip">复制<b>(<em>C</em>)</b></button>
            <button class="chip">参照<b>(<em>R</em>)</b></button>
            <b>]:</b>
            <i class="caret up"></i>
          </div>
        </div>
      </div>
    </main>

    <nav class="layouts">
      <button v-for="(l, i) in layouts" :key="l" :class="{ current: i === 0 }">
        <svg class="shape" viewBox="0 0 100 26" preserveAspectRatio="none"><path d="M0 0C10 3 12 10 15 18Q18 26 26 26H74Q82 26 85 18C88 10 90 3 100 0z" /></svg>
        <span>{{ l }}</span>
      </button>
      <button class="add-layout" aria-label="新建布局"><svg width="33" height="24"><path d="M33 0Q32 23 19 23H0Q2 2 16 0z" fill="#303744" /><path d="M17 6v12M11 12h12" stroke="#a5a9af" stroke-width="3" /></svg></button>
    </nav>

    <footer class="status">
      <button class="coords">1588.1653, 2061.5793, 0.0000</button>
      <button class="model">模型</button>
      <div v-for="(g, i) in statusGroups" :key="i" class="cells" :class="{ gap: g.gap }">
        <template v-for="(c, j) in g.cells" :key="j">
          <button v-if="c === 'v'" class="drop" aria-label="更多"><i class="caret big"></i></button>
          <button v-else-if="c === 'scale'" class="anno-scale">1:1 / 100%<i class="caret big"></i></button>
          <label v-else-if="c === 'units'" class="units"><Icon name="ruler" /><select aria-label="单位"><option>小数</option></select><i class="caret big"></i></label>
          <button v-else class="cell" :class="{ on: c[0] === '*', soft: c === '*perf', roomy: c === 'trusted' }" :aria-label="c"><Icon :name="c.replace('*', '')" /></button>
        </template>
      </div>
    </footer>

    <div class="watermark">
      <div class="brand">
        <span class="bai">Bai</span>
        <svg width="112" height="130" viewBox="0 0 112 130">
          <g fill="#c2c3c5">
            <ellipse cx="14" cy="47" rx="14" ry="18" /><ellipse cx="41" cy="20" rx="13" ry="19" />
            <ellipse cx="75" cy="22" rx="14" ry="18" transform="rotate(10 75 22)" /><ellipse cx="97" cy="55" rx="14" ry="18" />
            <path d="M55 50C70 50 76 65 86 75Q103 88 103 103C102 116 92 122 80 121Q55 116 32 120C18 121 8 112 8 100Q8 86 22 76C34 65 38 50 55 50z" />
          </g>
          <text x="55" y="109" text-anchor="middle">du</text>
        </svg>
        <span class="cn">经验</span>
      </div>
      <div class="site">jingyan.baidu.com</div>
    </div>
  </div>
</template>

<style>
body {
  background: #222932;
}
</style>

<style scoped>
.app {
  position: relative;
  display: flex;
  flex-direction: column;
  min-height: 100vh;
  box-sizing: border-box;
  border: 1px solid #0c93d4;
  background: #222932;
  color: #f2f2f2;
  font: 18px/24px "Open Sans", "Noto Sans CJK SC", sans-serif;
  overflow: hidden;
}
button, select, input {
  padding: 0;
  border: 0;
  background: none;
  color: inherit;
  font: inherit;
  white-space: nowrap;
}
select {
  appearance: none;
}
svg {
  display: block;
  flex: none;
  overflow: visible;
}
p, h1 {
  margin: 0;
}
.caret {
  flex: none;
  width: 0;
  height: 0;
  border: 4px solid transparent;
  border-top: 5px solid #dcdcdc;
  border-bottom: 0;
}
.caret.big {
  border-width: 6px 6px 0;
}
.caret.wide {
  border-width: 8px 6px 0;
}
.caret.right {
  border: 6px solid transparent;
  border-left-color: #dcdcdc;
  border-right: 0;
}
.caret.up {
  border: 6px solid transparent;
  border-top: 0;
  border-bottom-color: #555;
}

.top {
  display: flex;
}
.logo {
  width: 74px;
  padding: 12px 0 0 14px;
  align-self: flex-start;
}
.top-main {
  flex: 1;
}
.title-row {
  display: flex;
  align-items: center;
  height: 42px;
  padding: 0 0 2px 4px;
}
.quick {
  display: flex;
  align-items: center;
  gap: 12px;
}
.quick .more {
  margin: 0 -2px 0 -4px;
}
.quick .more + button {
  margin-left: 2px;
}
.dim .caret {
  border-top-color: #8b9097;
}
.quick .custom {
  display: grid;
  justify-items: center;
  padding-top: 3px;
  border-top: 2px solid #dcdcdc;
}
h1 {
  flex: 1;
  display: flex;
  justify-content: center;
  gap: 22px;
  font-size: 19px;
  font-weight: 400;
  white-space: nowrap;
}
.info {
  display: flex;
  align-items: center;
}
.search {
  width: 266px;
  height: 30px;
  box-sizing: border-box;
  margin: 0 8px 0 10px;
  padding: 0 4px 3px;
  background: #464f61;
  font-size: 17px;
  font-style: italic;
}
.search::placeholder {
  color: #b3b9c4;
  opacity: 1;
}
.login {
  display: flex;
  align-items: center;
  gap: 7px;
  width: 167px;
  margin: 0 19px 0 12px;
}
.login .caret {
  margin-left: auto;
}
.with-caret {
  display: flex;
  align-items: center;
  gap: 8px;
  margin-left: 11px;
}
.bar {
  width: 2px;
  height: 27px;
  margin: 0 1px 0 15px;
  background: #4d5a6f;
}
.window-buttons {
  display: flex;
  gap: 17px;
  margin: 0 11px 2px 102px;
}
.menus {
  display: flex;
  align-items: center;
  height: 26px;
}
.menus button {
  height: 26px;
  padding: 0 15px;
  color: #b4b8be;
}
.menus .active {
  border-radius: 3px 3px 0 0;
  background: #3b4453;
  color: #fff;
}
.menus .collapse {
  display: flex;
  align-items: center;
  justify-content: center;
  width: 23px;
  height: 11px;
  margin: 0 5px 0 31px;
  padding: 0;
  background: #f2f2f2;
}
.collapse i {
  border: 4px solid transparent;
  border-top: 0;
  border-bottom-color: #444;
}

.ribbon {
  display: grid;
  grid-template-columns: 314fr 338fr 232fr 376fr 146fr 300fr 100fr 112fr 112fr 95fr;
  gap: 2px;
  padding: 1px 4px 7px 7px;
}
.panel {
  display: flex;
  flex-direction: column;
  min-width: 0;
  background: #3b4453;
}
.body {
  display: flex;
  height: 108px;
  padding: 5px 0 7px;
}
.foot {
  display: flex;
  align-items: center;
  justify-content: center;
  gap: 9px;
  height: 25px;
}
.launch svg {
  margin-left: 3px;
}
.props + .launch {
  padding-left: 113px;
  justify-content: flex-start;
}
.props + .launch svg {
  margin: 0 6px 0 auto;
}
.large {
  display: flex;
  flex-direction: column;
  align-items: center;
  width: 60px;
  padding-top: 5px;
}
.large svg {
  margin-bottom: 5px;
}
.large .caret {
  margin-top: 3px;
}
.stack {
  display: grid;
  grid-template-rows: repeat(3, 36px);
}
.grow {
  flex: 1;
}
.small {
  display: flex;
  align-items: center;
  gap: 7px;
}
.more {
  display: flex;
  align-items: center;
  justify-content: center;
}
.pair {
  display: flex;
  align-items: center;
  gap: 10px;
}
.draw {
  padding-left: 2px;
}
.draw .stack {
  margin-left: 15px;
}
.modify {
  display: grid;
  grid-template: repeat(3, 36px) / 88px 88px 82px 12px 1fr;
  padding-left: 11px;
}
.modify .end {
  justify-content: center;
}
.note {
  padding-left: 5px;
}
.note .large {
  width: 64px;
}
.note .stack {
  margin-left: 4px;
}
.spread {
  width: 88px;
}
.spread .caret {
  margin-left: auto;
}
.layer .large, .block .large, .props .large {
  width: 64px;
}
.combo {
  display: flex;
  align-items: center;
  height: 34px;
  box-sizing: border-box;
  margin-right: 3px;
  padding: 0 0 0 4px;
  border: 2px solid #2c3440;
  background: #4d5a6f;
}
.layer .combo {
  gap: 3px;
  margin-left: -2px;
}
.combo select {
  flex: 1;
  min-width: 0;
}
.swatch {
  width: 18px;
  height: 18px;
  margin: 4px 4px 0;
  border: 2px solid #000;
  background: #fff;
}
.color .swatch {
  width: 20px;
  height: 20px;
  margin: 0 16px 0 14px;
  border: 2px solid #bbb;
}
.rule {
  width: 96px;
  height: 2px;
  margin-right: 3px;
  background: #f2f2f2;
}
.tools {
  display: flex;
  align-items: center;
  gap: 12px;
  padding-left: 2px;
}
.block .stack {
  margin-left: 3px;
}
.block .small .caret {
  margin-left: 3px;
}
.icons {
  justify-items: center;
  align-items: center;
}
.props .icons {
  width: 24px;
  margin-right: 3px;
}
.two {
  justify-content: space-between;
}
.two .large {
  width: 66px;
  margin-left: 4px;
}
.two .icons {
  width: 36px;
  margin-right: 4px;
}
.two:has(.on) .large {
  width: 56px;
}
.two .icons button {
  display: grid;
  place-items: center;
  width: 36px;
  height: 33px;
}
.two .icons .on {
  border: 1px solid #6ec1ff;
  outline: 1px solid #4d86b4;
  outline-offset: -2px;
  background: #46607c;
}
.one {
  justify-content: center;
}
.one .large {
  padding-top: 11px;
}

.files {
  display: flex;
  height: 33px;
  margin: 0 3px;
  padding-left: 4px;
  border-bottom: 6px solid #3b4453;
}
.file {
  position: relative;
  display: flex;
  align-items: center;
  justify-content: space-between;
  width: 224px;
  padding: 0 34px 0 44px;
  color: #a9afb8;
}
.file + .file {
  width: 218px;
  margin-left: -26px;
  padding: 0 37px 0 31px;
  color: #fff;
}
.shape {
  position: absolute;
  inset: 0;
  width: 100%;
  height: 100%;
  fill: #303744;
}
.current .shape {
  fill: #3b4453;
}
.file span, .file span + svg, .layouts span {
  position: relative;
}
.add {
  margin-left: -8px;
  padding-top: 4px;
}

.canvas {
  position: relative;
  flex: 1;
  min-height: 700px;
  margin: 0 3px;
  overflow: hidden;
}
.drawing {
  position: absolute;
  inset: 0;
}
.major {
  fill: #2f3647;
}
.minor {
  fill: #262d38;
}
.dimension {
  fill: #fff;
  font: 46px "Liberation Sans", sans-serif;
}
.view-label {
  position: absolute;
  left: 4px;
  top: 6px;
}
.prompt {
  position: absolute;
  left: 667px;
  top: 337px;
  display: flex;
  align-items: center;
  justify-content: space-between;
  width: 172px;
  height: 34px;
  padding: 0 7px 0 5px;
  border: 1px solid #000;
  background: #999;
  color: #000;
  line-height: 20px;
}
.value {
  position: absolute;
  left: 857px;
  top: 337px;
  width: 75px;
  height: 30px;
  padding-left: 5px;
  border: 1px solid #000;
  background: #cce8cf;
  line-height: 0;
}
.value input {
  width: 60px;
  height: 24px;
  margin-top: 2px;
  background: #0078d7;
  color: #fff;
}
.pointer {
  position: absolute;
  left: 891px;
  top: 367px;
  filter: drop-shadow(2px 3px 2px #0006);
}
.view-buttons {
  position: absolute;
  right: 14px;
  top: 12px;
  display: flex;
  gap: 14px;
}
.view-cube {
  position: absolute;
  right: 19px;
  top: 48px;
  font-family: "Liberation Serif", "Noto Sans CJK SC", serif;
}
.wcs {
  position: absolute;
  right: 61px;
  top: 229px;
  display: flex;
  align-items: center;
  justify-content: space-between;
  width: 70px;
  height: 26px;
  padding: 0 5px;
  border: 2px solid #84858f;
  border-radius: 6px;
  background: #9d9eab;
  color: #484c55;
  font: 16px "Liberation Sans", sans-serif;
}
.nav-bar {
  position: absolute;
  right: 4px;
  top: 289px;
  display: flex;
  flex-direction: column;
  align-items: center;
  justify-content: space-between;
  width: 46px;
  height: 309px;
  padding: 1px 0;
  border-radius: 4px;
  background: #5d6165;
}
.nav-close {
  align-self: flex-end;
  margin-right: 3px;
}
.nav-bar .caret {
  border-top-color: #444a52;
}
.nav-bar .ruled {
  padding-top: 5px;
  border-top: 1px solid #686c70;
}
.ucs {
  position: absolute;
  left: 10px;
  bottom: 5px;
}
.command {
  position: absolute;
  left: 430px;
  right: 431px;
  bottom: 0;
  display: flex;
  flex-direction: column;
  align-items: flex-start;
  font-size: 20px;
}
.command b, .command strong {
  font: 18px "Liberation Mono", monospace;
  white-space: pre;
}
.command strong {
  font-weight: 700;
}
.command p {
  margin: 0 0 7px 95px;
  padding: 0 4px;
  border-radius: 4px;
  background: #636566;
  white-space: nowrap;
}
.command .old {
  background: #535558;
  color: #b2b4b6;
}
.command .mid-line {
  background: #5b5d5f;
  color: #dcdcdc;
}
.command p:nth-child(3) {
  margin-bottom: 4px;
}
.command-bar {
  display: flex;
  align-items: center;
  align-self: stretch;
  height: 40px;
  border-radius: 4px;
  background: #2b313c;
}
.grip {
  height: 26px;
  margin: 0 10px 0 12px;
  border-left: 2px dotted #dcdcdc;
}
.wrench {
  margin: 0 7px 0 15px;
}
.entry {
  flex: 1;
  display: flex;
  align-items: center;
  height: 36px;
  padding-left: 6px;
  border-radius: 3px;
  background: #cce8cf;
  color: #000;
}
.entry .big {
  margin: 0 9px 0 3px;
  border-top-color: #666;
}
.entry strong {
  margin-right: 8px;
}
.chip {
  height: 26px;
  margin-right: 5px;
  padding: 0 2px;
  border-radius: 5px;
  background: #d2cfd2;
}
.chip + b {
  margin-left: -7px;
}
.chip em {
  color: #00f;
  font-style: normal;
  font-weight: 700;
}
.entry .up {
  margin: 0 5px 0 auto;
}

.layouts {
  display: flex;
  height: 26px;
  margin: 0 3px 6px;
  padding-left: 6px;
  border-top: 2px solid #444b55;
}
.layouts button {
  position: relative;
  width: 92px;
  margin-right: -10px;
  color: #b4b8be;
}
.layouts .current {
  margin-right: -16px;
  color: #fff;
  font-weight: 700;
}
.layouts .add-layout {
  width: 33px;
  margin-left: 12px;
}

.status {
  display: flex;
  justify-content: flex-end;
  height: 36px;
  padding: 0 4px 5px;
  gap: 2px;
}
.coords {
  width: 270px;
  padding-right: 7px;
  background: #3b4453;
  color: #c4c8ce;
  font-size: 17px;
  text-align: right;
}
.model {
  width: 42px;
  margin-left: 4px;
  background: #3b4453;
  color: #fff;
  font-weight: 500;
}
.cells {
  display: flex;
  background: #3b4453;
}
.cells.gap {
  margin-left: 4px;
}
.cell {
  display: grid;
  place-items: center;
  width: 36px;
  box-sizing: border-box;
  border: 1px solid #3b4453;
}
.cell.roomy {
  width: 44px;
}
.cell.on {
  background: #6290c2;
}
.cell.soft {
  background: #54749a;
}
.drop {
  display: grid;
  place-items: center;
  width: 24px;
}
.anno-scale, .units {
  display: flex;
  align-items: center;
  justify-content: space-between;
  width: 108px;
  padding: 0 6px 0 8px;
  color: #fff;
  font-size: 16px;
}
.units {
  width: 134px;
  padding: 0 6px;
  font-size: 18px;
}
.units select {
  flex: 1;
  margin-left: 15px;
  font-weight: 500;
}

.watermark {
  position: absolute;
  right: 114px;
  bottom: 44px;
  width: 386px;
  color: #c2c3c5;
}
.brand {
  display: flex;
  align-items: flex-end;
}
.brand svg {
  margin-bottom: -5px;
}
.bai {
  width: 134px;
  font: 700 87px/74px "Liberation Sans", sans-serif;
}
.brand text {
  fill: #222932;
  font: 700 64px "Liberation Sans", sans-serif;
}
.cn {
  margin-left: 2px;
  font: 900 65px/82px "Noto Sans CJK SC", sans-serif;
  white-space: nowrap;
}
.site {
  font-size: 45px;
  line-height: 60px;
  color: #dfe0e1;
  white-space: nowrap;
}
</style>
